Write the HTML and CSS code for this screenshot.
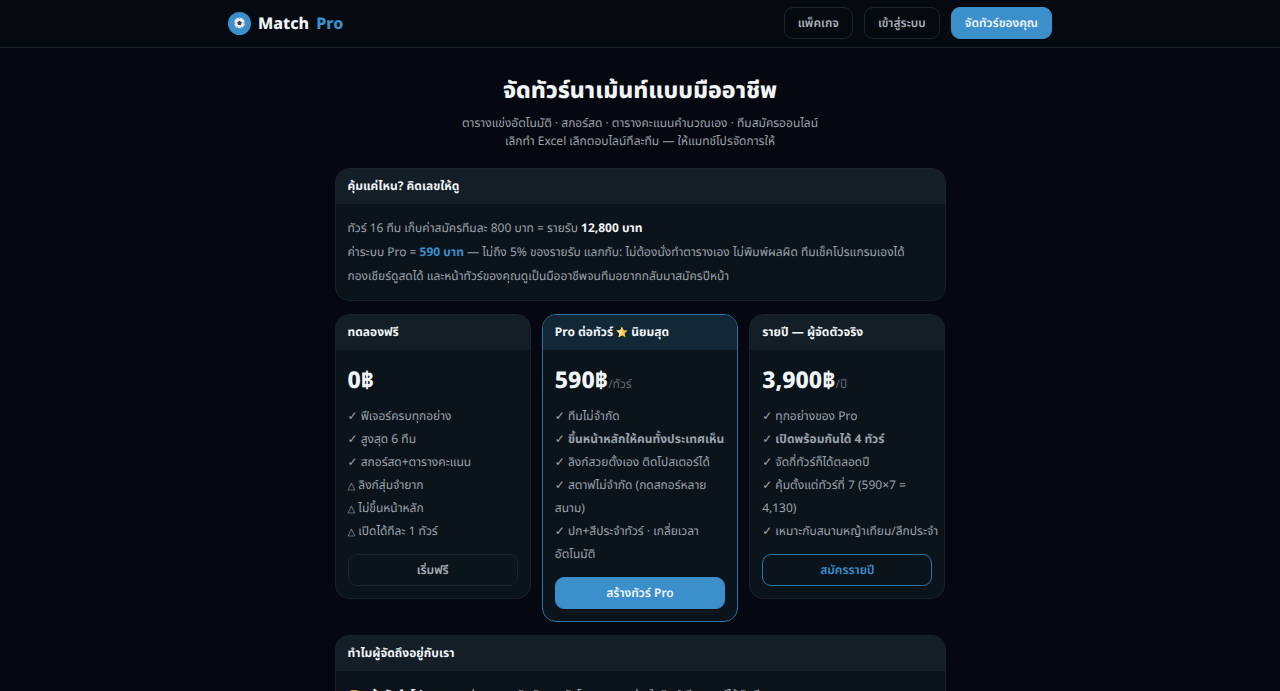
FILE: index.html
```html
<!DOCTYPE html>
<html lang="th">
<head>
  <meta charset="UTF-8">
  <meta name="viewport" content="width=device-width, initial-scale=1">
  <title>Match Pro - แพ็คเกจ</title>
  <link rel="stylesheet" href="styles.css">
</head>
<body>
  <header class="topbar">
    <div class="topbar-inner">
      <a class="brand" href="#">
        <svg class="logo" viewBox="0 0 24 24" aria-hidden="true">
          <circle cx="12" cy="12" r="12" fill="#3b8fcb"/>
          <circle cx="12" cy="11.4" r="5.6" fill="#e9edf0"/>
          <path d="M12 9l2.4 1.7-.9 2.8h-3l-.9-2.8z" fill="#39424b"/>
          <path d="M10.4 6.1h3.2L12 7.4zM6.6 10l1.3.9-.6 2.2-.7-.8zM17.4 10l-1.3.9.6 2.2.7-.8zM8.5 15.6l1.7-.4.6 1.5zM15.5 15.6l-1.7-.4-.6 1.5z" fill="#8b949c"/>
        </svg>
        <span class="brand-name">Match</span>
        <span class="brand-pro">Pro</span>
      </a>
      <nav class="menu">
        <a class="btn" href="#plans">แพ็คเกจ</a>
        <a class="btn" href="#login">เข้าสู่ระบบ</a>
        <a class="btn btn-primary" href="#create">จัดทัวร์ของคุณ</a>
      </nav>
    </div>
  </header>

  <main class="page">
    <section class="hero">
      <h1>จัดทัวร์นาเม้นท์แบบมืออาชีพ</h1>
      <p>ตารางแข่งอัตโนมัติ · สกอร์สด · ตารางคะแนนคำนวณเอง · ทีมสมัครออนไลน์<br>เลิกทำ Excel เลิกตอบไลน์ทีละทีม — ให้แมทช์โปรจัดการให้</p>
    </section>

    <section class="card">
      <h2 class="card-head">คุ้มแค่ไหน? คิดเลขให้ดู</h2>
      <div class="card-body worth">
        <p>ทัวร์ 16 ทีม เก็บค่าสมัครทีมละ 800 บาท = รายรับ <b class="white">12,800 บาท</b></p>
        <p>ค่าระบบ Pro = <b class="blue">590 บาท</b> — ไม่ถึง 5% ของรายรับ แลกกับ: ไม่ต้องนั่งทำตารางเอง ไม่พิมพ์ผลผิด ทีมเช็คโปรแกรมเองได้ <span class="nowrap">กองเชียร์ดูสดได้</span> และหน้าทัวร์ของคุณดูเป็นมืออาชีพจนทีมอยากกลับมาสมัครปีหน้า</p>
      </div>
    </section>

    <section class="plans" id="plans">
      <div class="card">
        <h2 class="card-head">ทดลองฟรี</h2>
        <div class="card-body">
          <div class="price">0฿</div>
          <ul class="features">
            <li>✓ ฟีเจอร์ครบทุกอย่าง</li>
            <li>✓ สูงสุด 6 ทีม</li>
            <li>✓ สกอร์สด+ตารางคะแนน</li>
            <li><span class="tri">△</span> ลิงก์สุ่มจำยาก</li>
            <li><span class="tri">△</span> ไม่ขึ้นหน้าหลัก</li>
            <li><span class="tri">△</span> เปิดได้ทีละ 1 ทัวร์</li>
          </ul>
          <a class="btn btn-block" href="#free">เริ่มฟรี</a>
        </div>
      </div>

      <div class="card card-hot">
        <h2 class="card-head">Pro ต่อทัวร์
          <svg class="star" viewBox="0 0 24 24" aria-hidden="true"><path d="M12 1l3.3 7.4 8 .8-6 5.4 1.7 7.9-7-4.1-7 4.1 1.7-7.9-6-5.4 8-.8z" fill="#f5c84c"/><path d="M12 1v17.4l-7 4.1 1.7-7.9-6-5.4 8-.8z" fill="#fbe08a"/></svg>
          นิยมสุด</h2>
        <div class="card-body">
          <div class="price">590฿<small>/ทัวร์</small></div>
          <ul class="features">
            <li>✓ ทีมไม่จำกัด</li>
            <li>✓ <b>ขึ้นหน้าหลักให้คนทั้งประเทศเห็น</b></li>
            <li>✓ ลิงก์สวยตั้งเอง ติดโปสเตอร์ได้</li>
            <li>✓ สตาฟไม่จำกัด (กดสกอร์หลายสนาม)</li>
            <li>✓ ปก+สีประจำทัวร์ · เกลี่ยเวลาอัตโนมัติ</li>
          </ul>
          <a class="btn btn-block btn-primary" href="#pro">สร้างทัวร์ Pro</a>
        </div>
      </div>

      <div class="card">
        <h2 class="card-head">รายปี — ผู้จัดตัวจริง</h2>
        <div class="card-body">
          <div class="price">3,900฿<small>/ปี</small></div>
          <ul class="features">
            <li>✓ ทุกอย่างของ Pro</li>
            <li>✓ <b>เปิดพร้อมกันได้ 4 ทัวร์</b></li>
            <li>✓ จัดกี่ทัวร์ก็ได้ตลอดปี</li>
            <li>✓ คุ้มตั้งแต่ทัวร์ที่ 7 (590×7 = 4,130)</li>
            <li class="nowrap">✓ เหมาะกับสนามหญ้าเทียม/ลีกประจำ</li>
          </ul>
          <a class="btn btn-block btn-outline" href="#year">สมัครรายปี</a>
        </div>
      </div>
    </section>

    <section class="card">
      <h2 class="card-head">ทำไมผู้จัดถึงอยู่กับเรา</h2>
      <div class="card-body worth">
        <p><svg class="star" viewBox="0 0 24 24" aria-hidden="true"><path d="M5 2h14v8a7 7 0 0 1-14 0zM10 17h4v3h3v3H7v-3h3z" fill="#d9952b"/></svg> <b class="white">หน้าทัวร์ดูโปร</b> ตารางแข่ง ผลสด อันดับดาวซัลโว ครบทุกอย่างในลิงก์เดียว แชร์ได้ทันที</p>
      </div>
    </section>
  </main>
</body>
</html>
```
FILE: styles.css
```css
* {
  box-sizing: border-box;
}
html {
  scrollbar-width: none;
}
body {
  margin: 0;
  background-color: #050810;
  color: #9ba3ab;
  font-family: "Noto Sans", "Noto Sans Thai", sans-serif;
  font-size: 12px;
  text-rendering: geometricPrecision;
}
h1, h2, p, ul {
  margin: 0;
  padding: 0;
}
a {
  text-decoration: none;
}
.topbar {
  background-color: #040a10;
  border-bottom: 1px solid #1a2129;
}
.topbar-inner {
  max-width: 824px;
  height: 47px;
  margin: 0 auto;
  padding-bottom: 1px;
  display: flex;
  align-items: center;
  justify-content: space-between;
}
.brand {
  display: flex;
  align-items: center;
  gap: 7px;
  font-size: 16px;
  font-weight: 800;
  line-height: 20px;
}
.logo {
  width: 23px;
  height: 23px;
}
.brand-name {
  color: #f2f5f8;
}
.brand-pro {
  color: #3b8fcb;
}
.menu {
  display: flex;
  gap: 11px;
}
.btn {
  display: flex;
  align-items: center;
  justify-content: center;
  height: 32px;
  padding: 0 13px;
  border: 1px solid #1d242c;
  border-radius: 9px;
  color: #a9b0b8;
  font-size: 12px;
  font-weight: 600;
  line-height: 16px;
}
.btn-primary {
  background-color: #3b8fcb;
  border-color: #3b8fcb;
  color: #f2f7fb;
}
.btn-outline {
  border-color: #2b74a8;
  color: #3b8fcb;
}
.btn-block {
  margin-top: 12px;
}
.page {
  max-width: 611px;
  margin: 0 auto;
  padding-bottom: 24px;
  display: flex;
  flex-direction: column;
  gap: 13px;
}
.hero {
  padding-top: 23px;
  padding-bottom: 5px;
  text-align: center;
}
.hero h1 {
  color: #f2f5f8;
  font-size: 23px;
  font-weight: 800;
  line-height: 36px;
}
.hero p {
  margin-top: 7px;
  line-height: 18px;
}
.card {
  background-color: #0b131b;
  border: 1px solid #1a222a;
  border-radius: 14px;
  overflow: hidden;
}
.card-head {
  height: 35px;
  padding: 0 12px;
  background-color: #141e27;
  color: #f2f5f8;
  font-size: 12px;
  font-weight: 700;
  line-height: 34px;
}
.card-body {
  padding: 12px;
}
.worth {
  line-height: 24px;
}
.nowrap {
  white-space: nowrap;
}
.white {
  color: #f2f5f8;
}
.blue {
  color: #3b8fcb;
}
.plans {
  display: grid;
  grid-template-columns: repeat(3, minmax(0, 1fr));
  align-items: start;
  gap: 11px;
}
.card-hot {
  border-color: #2b74a8;
}
.card-hot .card-head {
  background-color: #122836;
}
.star {
  width: 12px;
  height: 12px;
  vertical-align: -2px;
}
.price {
  height: 35px;
  color: #f2f5f8;
  font-size: 23px;
  font-weight: 800;
  line-height: 34px;
}
.price small {
  color: #626a72;
  font-size: 12px;
  font-weight: 400;
}
.features {
  margin-top: 7px;
  list-style: none;
  line-height: 23px;
}
.tri {
  font-family: "DejaVu Sans", sans-serif;
  font-size: 10px;
  font-weight: 700;
  line-height: 12px;
}
```
